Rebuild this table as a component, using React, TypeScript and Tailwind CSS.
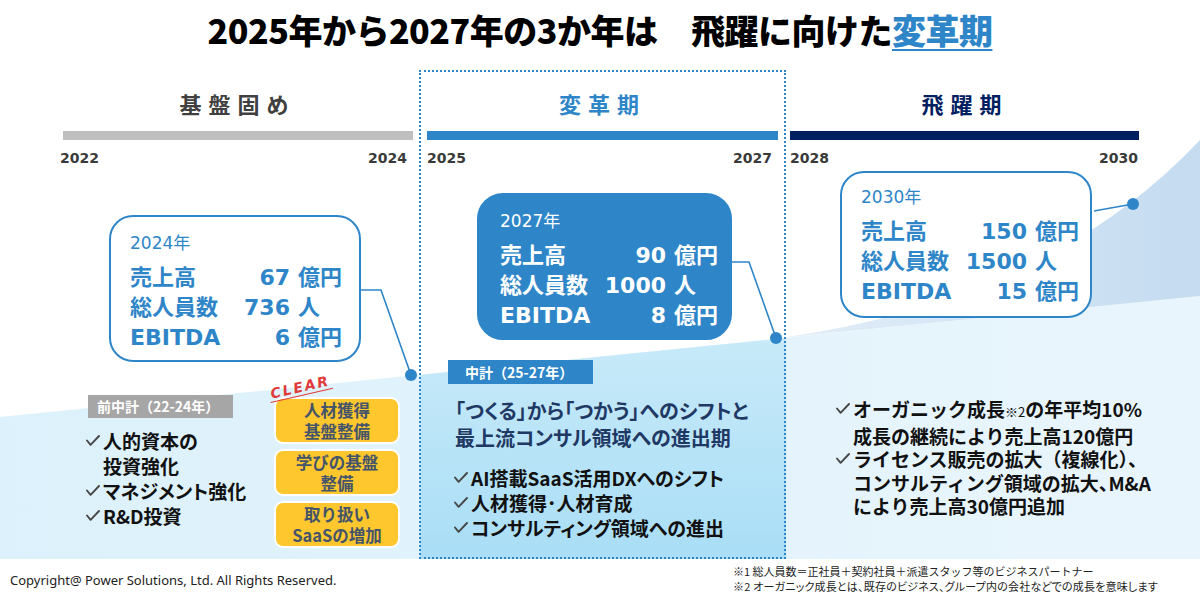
import React from 'react';

type Row = [string, string, string];

const BLUE = '#2e86c8';

function Check({ children, top = 'mt-[7px]' }: { children: React.ReactNode; top?: string }) {
  return (
    <div className="flex">
      <svg className={`${top} mr-[3px] shrink-0`} width="14" height="11" viewBox="0 0 14 11">
        <path d="M1 5.5 L4.6 9.8 L13 1" fill="none" stroke="#474747" strokeWidth="1.9" strokeLinecap="round" strokeLinejoin="round" />
      </svg>
      <span className="whitespace-nowrap">{children}</span>
    </div>
  );
}

function StatBox({ year, rows, filled, className }: { year: string; rows: Row[]; filled?: boolean; className: string }) {
  return (
    <div
      className={`h-[147px] w-[252px] border-2 ${
        filled ? 'border-[#2e86c8] bg-[#2e86c8] text-white rounded-[26px]' : 'border-[#2e86c8] bg-white text-[#2e86c8] rounded-[24px]'
      } ${className}`}
    >
      <div className="text-[17px] leading-[24px] font-['DejaVu_Sans','Noto_Sans_CJK_JP',sans-serif]">{year}</div>
      <div className="mt-[8px] text-[22px] font-bold leading-[30px] font-['DejaVu_Sans','Noto_Sans_CJK_JP',sans-serif]">
        {rows.map(([label, num, unit]) => (
          <div key={label} className="flex">
            <span className="w-[96px] whitespace-nowrap">{label}</span>
            <span className="flex-1 text-right">{num}</span>
            <span className="ml-[8px] w-[48px] whitespace-nowrap">{unit}</span>
          </div>
        ))}
      </div>
    </div>
  );
}

function Background() {
  return (
    <svg className="absolute inset-0" width="1200" height="595" viewBox="0 0 1200 595">
      <defs>
        <linearGradient id="low" x1="0" y1="0" x2="1" y2="0">
          <stop offset="0" stopColor="#dcf1fb" />
          <stop offset="1" stopColor="#e9f5fc" />
        </linearGradient>
        <linearGradient id="mid" x1="0" y1="0" x2="0" y2="1">
          <stop offset="0" stopColor="#c8eaf9" />
          <stop offset="1" stopColor="#a9def6" />
        </linearGradient>
        <linearGradient id="up" x1="0" y1="0" x2="1" y2="0">
          <stop offset="0" stopColor="#e2eef8" />
          <stop offset="1" stopColor="#c4dbf0" />
        </linearGradient>
      </defs>
      <polygon points="0,417 1200,296 1200,559 0,559" fill="url(#low)" />
      <polygon points="420,375 786,338 786,559 420,559" fill="url(#mid)" />
      <path d="M780,338 Q1050,300 1200,140 L1200,296 Z" fill="url(#up)" />
      <g stroke={BLUE} strokeWidth="1.6" fill="none">
        <polyline points="361,290 381,290 411,375" />
        <polyline points="732,262 749,262 776,338" />
        <polyline points="1094,211 1133,204" />
      </g>
      <g fill={BLUE}>
        <circle cx="411" cy="375" r="6" />
        <circle cx="776" cy="338" r="6" />
        <circle cx="1133" cy="204" r="6" />
      </g>
    </svg>
  );
}

export default function App() {
  const left: Row[] = [['売上高', '67', '億円'], ['総人員数', '736', '人'], ['EBITDA', '6', '億円']];
  const mid: Row[] = [['売上高', '90', '億円'], ['総人員数', '1000', '人'], ['EBITDA', '8', '億円']];
  const right: Row[] = [['売上高', '150', '億円'], ['総人員数', '1500', '人'], ['EBITDA', '15', '億円']];

  const yearCls = "flex justify-between text-[14px] font-bold leading-[20px] text-[#3a3a3a] font-['DejaVu_Sans',sans-serif]";
  const headCls = "text-center text-[22px] font-bold leading-[32px] tracking-[7px] font-['Noto_Sans_CJK_JP',sans-serif]";

  return (
    <div className="relative h-[595px] w-[1200px] overflow-hidden bg-white font-['Noto_Sans_CJK_JP',sans-serif]">
      <Background />
      <div className="relative">
        <div className="flex h-[60px] items-center justify-center">
          <h1 className="whitespace-pre text-[34px] font-black leading-[44px] tracking-[-0.5px] text-black">
            2025年から2027年の3か年は　飛躍に向けた
            <span className="text-[#2e86c8] underline decoration-[2px] underline-offset-[5px]">変革期</span>
          </h1>
        </div>

        <div className="mt-[10px] flex pl-[60px]">
          {/* 基盤固め */}
          <div className="flex w-[355px] flex-col pt-[17px]">
            <div className={`${headCls} text-[#404040]`}>基盤固め</div>
            <div className="ml-[3px] mt-[12px] h-[9px] w-[350px] bg-[#bfbfbf]" />
            <div className={`${yearCls} mt-[8px] w-[347px]`}>
              <span>2022</span>
              <span>2024</span>
            </div>
            <StatBox year="2024年" rows={left} className="ml-[49px] mt-[47px] pl-[19px] pr-[13px] pt-[14px]" />
            <div className="mt-[33px] flex">
              <div className="ml-[26px] w-[188px]">
                <div className="ml-[2px] h-[23px] w-[145px] bg-[#a6a6a6] pl-[9px] text-[14px] font-bold leading-[23px] text-white">
                  前中計（22-24年）
                </div>
                <div className="mt-[10px] text-[19px] font-bold leading-[25px] text-[#111] [font-feature-settings:'palt']">
                  <Check>
                    人的資本の
                    <br />
                    投資強化
                  </Check>
                  <Check>マネジメント強化</Check>
                  <Check>R&amp;D投資</Check>
                </div>
              </div>
              <div className="relative mt-[2px] flex w-[126px] flex-col gap-[5px]">
                <div className="absolute -left-[6px] -top-[18px] rotate-[-13deg] border-b-[1.5px] border-[#e03a3a] px-[2px] text-[14px] font-bold italic leading-[16px] tracking-[2px] text-[#e03a3a] font-['DejaVu_Sans',sans-serif]">
                  CLEAR
                </div>
                {[
                  ['人材獲得', '基盤整備'],
                  ['学びの基盤', '整備'],
                  ['取り扱い', 'SaaSの増加'],
                ].map(([a, b]) => (
                  <div
                    key={a}
                    className="flex h-[47px] flex-col items-center justify-center rounded-[9px] border-2 border-white bg-[#fec72e] text-[16.5px] font-bold leading-[21px] text-[#44546a]"
                  >
                    <span>{a}</span>
                    <span>{b}</span>
                  </div>
                ))}
              </div>
            </div>
          </div>

          {/* 変革期 */}
          <div className="ml-[4px] flex h-[489px] w-[367px] flex-col border-2 border-dotted border-[#2e86c8] px-[6px] pt-[15px]">
            <div className={`${headCls} text-[#2e86c8]`}>変革期</div>
            <div className="mt-[12px] h-[9px] w-[351px] bg-[#2e86c8]" />
            <div className={`${yearCls} mt-[8px] w-[345px]`}>
              <span>2025</span>
              <span>2027</span>
            </div>
            <StatBox year="2027年" rows={mid} filled className="ml-[50px] mt-[25px] w-[255px] pl-[21px] pr-[8px] pt-[14px]" />
            <div className="ml-[21px] mt-[20px] h-[24px] w-[145px] bg-[#2e86c8] pl-[17px] text-[14px] font-bold leading-[24px] text-white">
              中計（25-27年）
            </div>
            <div className="ml-[28px] mt-[13px] whitespace-nowrap text-[20px] font-bold leading-[27px] text-[#1f3864] [font-feature-settings:'palt']">
              「つくる」から「つかう」へのシフトと
              <br />
              最上流コンサル領域への進出期
            </div>
            <div className="ml-[27px] mt-[14px] text-[19px] font-bold leading-[25px] text-[#111] [font-feature-settings:'palt']">
              <Check>AI搭載SaaS活用DXへのシフト</Check>
              <Check>人材獲得･人材育成</Check>
              <Check>コンサルティング領域への進出</Check>
            </div>
          </div>

          {/* 飛躍期 */}
          <div className="ml-[4px] flex w-[350px] flex-col pt-[17px]">
            <div className={`${headCls} text-[#002060]`}>飛躍期</div>
            <div className="mt-[12px] h-[9px] w-[349px] bg-[#002060]" />
            <div className={`${yearCls} mt-[8px] w-[348px]`}>
              <span>2028</span>
              <span>2030</span>
            </div>
            <StatBox year="2030年" rows={right} className="ml-[50px] mt-[3px] pl-[19px] pr-[7px] pt-[12px]" />
            <div className="ml-[46px] mt-[79px] text-[19px] font-bold leading-[23.5px] text-[#111]">
              <Check top="mt-[6px]">
                オーガニック成長<span className="text-[13px] font-normal">※2</span>の年平均10%
                <br />
                成長の継続により売上高120億円
              </Check>
              <Check top="mt-[6px]">
                ライセンス販売の拡大（複線化）、
                <br />
                コンサルティング領域の拡大<span className="[font-feature-settings:'palt']">、</span>M&amp;A
                <br />
                により売上高30億円追加
              </Check>
            </div>
          </div>
        </div>

        <div className="flex h-[36px]">
          <div className="w-[733px] pl-[10px] pt-[12px] text-[13px] leading-[18px] text-[#222] font-['Noto_Sans',sans-serif]">
            Copyright@ Power Solutions, Ltd. All Rights Reserved.
          </div>
          <div className="whitespace-nowrap pt-[5px] text-[11px] leading-[15px] text-[#222]">
            <div>※1 総人員数＝正社員＋契約社員＋派遣スタッフ等のビジネスパートナー</div>
            <div className="tracking-[0.2px] [font-feature-settings:'palt']">
              ※2 オーガニック成長とは、既存のビジネス、グループ内の会社などでの成長を意味します
            </div>
          </div>
        </div>
      </div>
    </div>
  );
}
